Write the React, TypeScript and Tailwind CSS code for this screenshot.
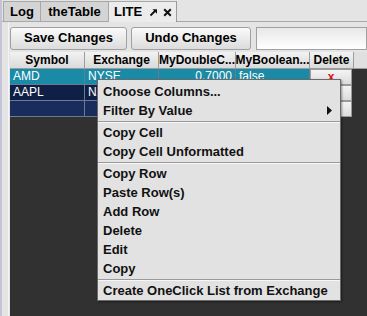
import { Fragment } from 'react'

const font = { fontFamily: '"Liberation Sans", Arial, sans-serif' }

const columns = [
  { name: 'Symbol', w: 'w-[75px]' },
  { name: 'Exchange', w: 'w-[74px]' },
  { name: 'MyDoubleC...', w: 'w-[77px]' },
  { name: 'MyBoolean...', w: 'w-[74px]' },
  { name: 'Delete', w: 'w-[44px]' },
]

const rows = [
  { bg: 'bg-[#1a8ba6]', cells: ['AMD', 'NYSE', '0.7000', 'false'], x: true },
  { bg: 'bg-[#0f1f45]', cells: ['AAPL', 'NASDAQ', '', ''], x: false },
  { bg: 'bg-[#1a2c5c]', cells: ['', '', '', ''], x: false },
]

const menu: (string | null)[] = [
  'Choose Columns...',
  'Filter By Value',
  null,
  'Copy Cell',
  'Copy Cell Unformatted',
  null,
  'Copy Row',
  'Paste Row(s)',
  'Add Row',
  'Delete',
  'Edit',
  'Copy',
  null,
  'Create OneClick List from Exchange',
]

export default function App() {
  return (
    <div className="relative w-[367px] h-[316px] overflow-hidden bg-[#e4e4e4] flex" style={font}>
      <div className="w-[2px] bg-[#c4c4d8] shrink-0" />
      <div className="flex-1 flex flex-col">
        {/* tabs */}
        <div className="h-[22px] flex items-end pl-[1px] border-b border-[#a8a8a8]">
          <div className="w-[38px] h-[20px] flex items-center justify-center text-[13px] font-bold bg-[#d4d4d4] border border-b-0 border-[#a8a8a8]">Log</div>
          <div className="w-[68px] h-[20px] flex items-center justify-center text-[13px] font-bold bg-[#d4d4d4] border border-b-0 border-l-0 border-[#a8a8a8]">theTable</div>
          <div className="w-[68px] h-[21px] pl-[5px] flex items-center text-[13px] font-bold bg-[#ececec] border border-b-0 border-l-0 border-r-[#9a9a9a] border-t-[#a8a8a8] -mb-px">
            <span>LITE</span>
            <svg width="9" height="9" viewBox="0 0 9 9" className="ml-[7px]">
              <path d="M1.5 7.5 L6 3" stroke="#111" strokeWidth="1.8" />
              <path d="M3.5 1.2 L8 1.2 L8 5.7 Z" fill="#111" />
            </svg>
            <svg width="9" height="9" viewBox="0 0 9 9" className="ml-[5px]">
              <path d="M1.2 1.2 L7.8 7.8 M7.8 1.2 L1.2 7.8" stroke="#111" strokeWidth="2" />
            </svg>
          </div>
        </div>
        {/* panel */}
        <div className="flex-1 flex flex-col pl-[6px] bg-[#e4e4e4]">
          <div className="flex-1 flex flex-col border-l border-[#f4f4f4] pl-[1px]">
            <div className="h-[29px] flex items-center gap-[4px] pt-[4px] pb-[1px]">
              <div className="w-[117px] h-[23px] flex items-center justify-center text-[13px] font-bold border border-[#a0a0a0] rounded-[3px] bg-gradient-to-b from-[#fafafa] to-[#dcdcdc]">Save Changes</div>
              <div className="w-[120px] h-[23px] flex items-center justify-center text-[13px] font-bold border border-[#a0a0a0] rounded-[3px] bg-gradient-to-b from-[#fafafa] to-[#dcdcdc]">Undo Changes</div>
              <div className="flex-1 h-[23px] ml-[1px] border border-[#a0a0a0] bg-gradient-to-b from-[#e8e8e8] to-white" />
            </div>
            <div className="flex-1 flex flex-col bg-[#313131] mt-[1px]">
              <div className="h-[17px] flex bg-[#e0e0e0]">
                {columns.map((c) => (
                  <div key={c.name} className={`${c.w} h-full flex items-center justify-center text-[12px] font-bold border-r border-b border-[#9c9c9c] bg-gradient-to-b from-[#f2f2f2] to-[#dadada]`}>
                    {c.name}
                  </div>
                ))}
                <div className="flex-1 border-b border-[#9c9c9c]" />
              </div>
              {rows.map((r, i) => (
                <div key={i} className="h-[16px] flex">
                  <div className={`flex ${r.bg} text-white text-[12px]`}>
                    <div className="w-[75px] pl-[3px] border-r border-b border-[#6a7a90] leading-[15px]">{r.cells[0]}</div>
                    <div className="w-[74px] pl-[3px] border-r border-b border-[#6a7a90] leading-[15px]">{r.cells[1]}</div>
                    <div className="w-[77px] pr-[3px] text-right border-r border-b border-[#6a7a90] leading-[15px]">{r.cells[2]}</div>
                    <div className="w-[74px] pl-[3px] border-r border-b border-[#6a7a90] leading-[15px]">{r.cells[3]}</div>
                  </div>
                  <div className="w-[44px] bg-[#313131] pr-[2px]">
                    <div className="h-[16px] bg-gradient-to-b from-[#f4f4f4] to-[#dcdcdc] border border-[#9a9a9a] flex items-center justify-center text-[#e01010] text-[12px] font-bold leading-none">
                      {r.x ? 'x' : ''}
                    </div>
                  </div>
                </div>
              ))}
            </div>
          </div>
        </div>
      </div>

      {/* context menu */}
      <div className="absolute left-[97px] top-[79px] w-[244px] h-[222px] bg-[#e2e2e2] border border-[#6a6a6a] shadow-[1px_1px_2px_rgba(0,0,0,0.4)] flex flex-col">
        {menu.map((m, i) =>
          m === null ? (
            <div key={i} className="h-[4px] flex flex-col justify-center">
              <div className="h-px bg-[#9a9a9a]" />
              <div className="h-px bg-[#f6f6f6]" />
            </div>
          ) : (
            <Fragment key={i}>
              <div className={`${i === 0 ? 'h-[21px] pt-[2px]' : 'h-[19px]'} pl-[5px] pr-[8px] flex items-center justify-between text-[13px] font-bold text-[#111] whitespace-nowrap`}>
                <span>{m}</span>
                {m === 'Filter By Value' && (
                  <svg width="5" height="9" viewBox="0 0 5 9">
                    <path d="M0 0 L5 4.5 L0 9 Z" fill="#111" />
                  </svg>
                )}
              </div>
            </Fragment>
          )
        )}
      </div>
    </div>
  )
}
